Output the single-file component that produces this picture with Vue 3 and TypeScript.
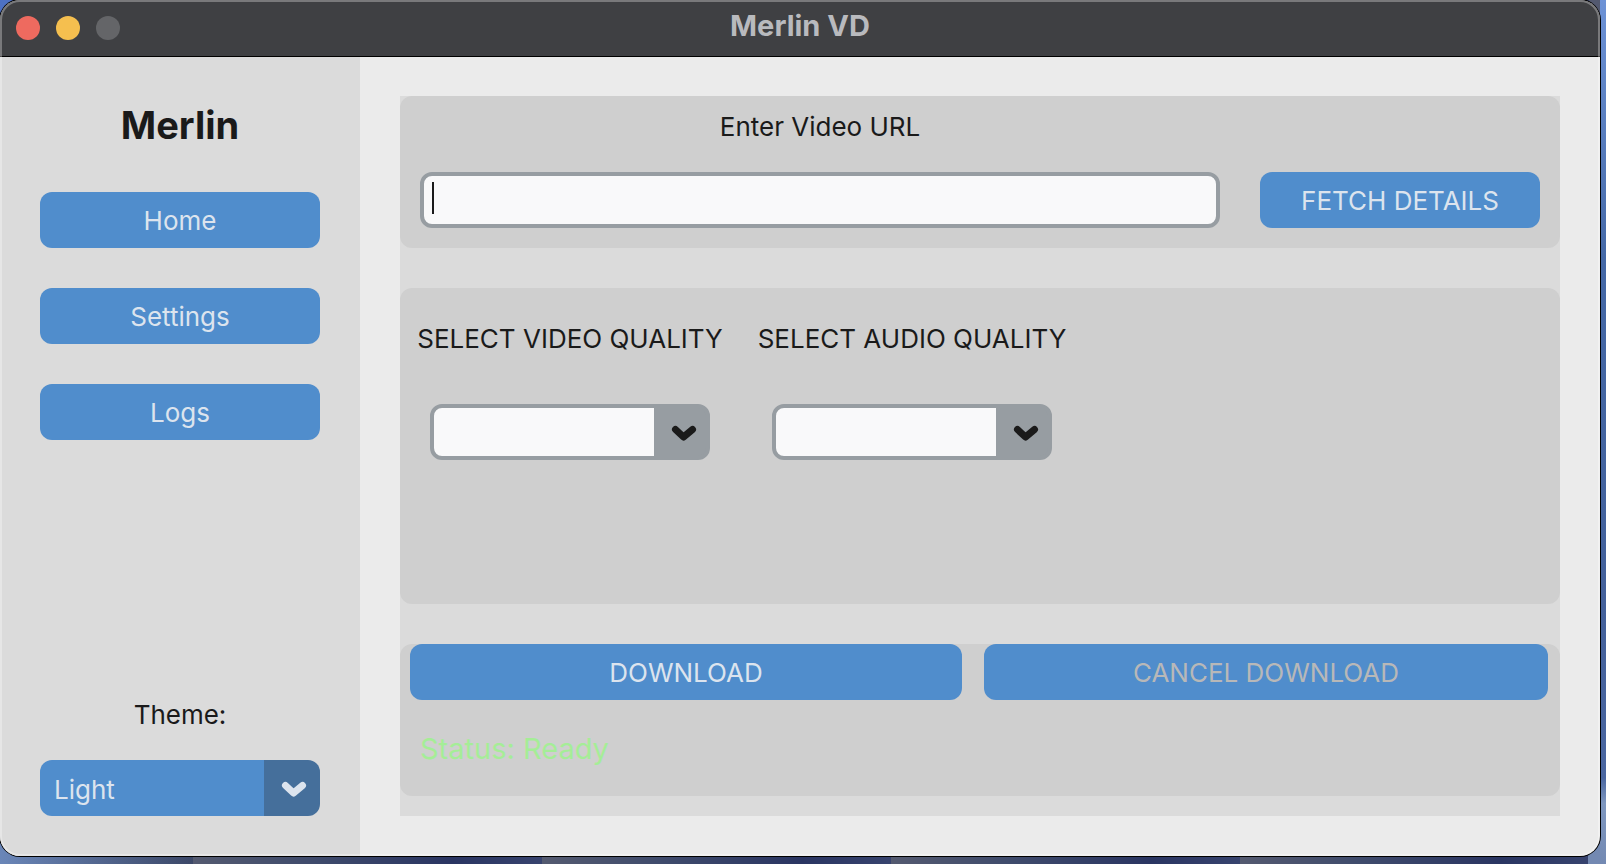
<script setup lang="ts">
import { ref } from 'vue'

interface QualityField {
  id: string
  label: string
}

const pages: string[] = ['Home', 'Settings', 'Logs']
const qualityFields: QualityField[] = [
  { id: 'video-quality', label: 'SELECT VIDEO QUALITY' },
  { id: 'audio-quality', label: 'SELECT AUDIO QUALITY' },
]

const theme = ref<string>('Light')
const videoUrl = ref<string>('')
const status = ref<string>('Ready')
</script>

<template>
  <div class="desktop">
    <div class="window">
      <header class="titlebar">
        <div class="lights">
          <button class="light close" type="button" aria-label="Close"></button>
          <button class="light minimize" type="button" aria-label="Minimize"></button>
          <button class="light zoom" type="button" aria-label="Zoom" disabled></button>
        </div>
        <span class="title">Merlin VD</span>
      </header>

      <div class="body">
        <aside class="sidebar">
          <h1 class="brand">Merlin</h1>
          <nav class="nav">
            <button v-for="page in pages" :key="page" class="btn" type="button">{{ page }}</button>
          </nav>
          <div class="theme">
            <label class="text" for="theme">Theme:</label>
            <div class="picker">
              <select id="theme" v-model="theme" class="select themed">
                <option>Light</option>
                <option>Dark</option>
                <option>System</option>
              </select>
              <svg class="chevron pale" viewBox="0 0 56 56" aria-hidden="true">
                <path d="M21.5 25.5L29.5 33L38.5 25.5" />
              </svg>
            </div>
          </div>
        </aside>

        <main class="main">
          <div class="content">
            <section class="card url">
              <label class="text" for="video-url">Enter Video URL</label>
              <div class="entry">
                <input id="video-url" v-model="videoUrl" class="input" type="text" />
                <span class="caret"></span>
              </div>
              <button class="btn fetch" type="button">FETCH DETAILS</button>
            </section>

            <section class="card quality">
              <div v-for="field in qualityFields" :key="field.id" class="field">
                <label class="text" :for="field.id">{{ field.label }}</label>
                <div class="picker">
                  <select :id="field.id" class="select combo">
                    <option value=""></option>
                  </select>
                  <svg class="chevron" viewBox="0 0 56 56" aria-hidden="true">
                    <path d="M21.5 25.5L29.5 33L38.5 25.5" />
                  </svg>
                </div>
              </div>
            </section>

            <section class="card actions">
              <div class="buttons">
                <button class="btn" type="button">DOWNLOAD</button>
                <button class="btn" type="button" disabled>CANCEL DOWNLOAD</button>
              </div>
              <p class="status" role="status">Status: {{ status }}</p>
            </section>
          </div>
        </main>
      </div>
    </div>
  </div>
</template>

<style>
body {
  margin: 0;
}
</style>

<style scoped>
* {
  box-sizing: border-box;
}

.desktop {
  display: flex;
  min-height: 100vh;
  padding: 0 6px 8px 0;
  background:
    linear-gradient(180deg, #6d92d6 0%, #4468a6 30%, #43609a 70%, #4a66a0 90%, #7f97bf 93%, #7389b2 100%) right / 6px 100% no-repeat,
    linear-gradient(#7389b2, #7389b2) right bottom / 18px 20px no-repeat,
    linear-gradient(#4d71c4, #4d71c4) left top / 20px 20px no-repeat,
    linear-gradient(90deg, #6a86b8, #3c4868) left bottom / 193px 100% no-repeat,
    repeating-linear-gradient(90deg, #545a70 0, #3f4b6c 120px, #2a3562 260px, #37436e 349px) 193px 0;
  color: #1a1a1a;
  font-family: Inter, "Liberation Sans", sans-serif;
  font-size: 26px;
  line-height: 32px;
}

.window {
  position: relative;
  display: flex;
  flex: 1;
  flex-direction: column;
  overflow: hidden;
  border-radius: 20px;
  background: #ebebeb;
  box-shadow: 0 0 0 1px #000;
}

.window::after {
  content: "";
  position: absolute;
  inset: 0;
  border-radius: 20px;
  box-shadow: inset 0 0 0 2px rgba(255, 255, 255, 0.3);
  pointer-events: none;
}

.titlebar {
  display: grid;
  grid-template-columns: 1fr auto 1fr;
  align-items: start;
  height: 57px;
  border-bottom: 1px solid #000;
  background: #3f4043;
}

.lights {
  display: flex;
  gap: 16px;
  padding: 16px;
}

.light {
  width: 24px;
  height: 24px;
  padding: 0;
  border: 0;
  border-radius: 50%;
}

.close {
  background: #ee6a5f;
}

.minimize {
  background: #f5bf4f;
}

.zoom {
  background: #646568;
}

.title {
  color: #b9babe;
  font-size: 29px;
  font-weight: 700;
  line-height: 52px;
}

.body {
  display: flex;
  flex: 1;
}

.sidebar {
  display: flex;
  flex-direction: column;
  width: 360px;
  padding: 40px;
  background: #dbdbdb;
}

.brand {
  margin: 0 0 39px;
  font-size: 38px;
  font-weight: 700;
  line-height: 56px;
  text-align: center;
}

.nav {
  display: flex;
  flex-direction: column;
  gap: 40px;
}

.theme {
  display: flex;
  flex-direction: column;
  gap: 29px;
  margin-top: auto;
}

.text {
  text-align: center;
  white-space: nowrap;
}

.btn {
  height: 56px;
  padding: 2px 12px 0;
  border: 0;
  border-radius: 12px;
  background: #508dcc;
  color: #dce4ee;
  font: inherit;
}

.btn:disabled {
  color: #b8b8b8;
}

.picker {
  position: relative;
  width: 280px;
}

.select {
  display: block;
  width: 100%;
  height: 56px;
  border-radius: 12px;
  appearance: none;
  color: inherit;
  font: inherit;
}

.themed {
  padding: 4px 60px 0 14px;
  border: 0;
  background: linear-gradient(#456f9b, #456f9b) right / 56px 100% no-repeat #508dcc;
  color: #dce4ee;
}

.combo {
  padding: 0 60px 0 8px;
  border: 4px solid #979da2;
  background: linear-gradient(#979da2, #979da2) right / 52px 100% no-repeat #f9f9fa;
}

.chevron {
  position: absolute;
  top: 0;
  right: 0;
  width: 56px;
  height: 56px;
  fill: none;
  stroke: #1a1a1a;
  stroke-linecap: round;
  stroke-linejoin: round;
  stroke-width: 7;
  pointer-events: none;
}

.pale {
  stroke: #dce4ee;
}

.main {
  display: flex;
  flex: 1;
  padding: 39px 40px 40px;
}

.content {
  display: flex;
  flex: 1;
  flex-direction: column;
  gap: 40px;
  padding-bottom: 20px;
  background: #dbdbdb;
}

.card {
  border-radius: 12px;
  background: #cfcfcf;
}

.url {
  display: grid;
  grid-template-columns: 1fr 280px;
  gap: 29px 40px;
  padding: 15px 20px 20px;
}

.entry {
  position: relative;
  grid-row: 2;
}

.input {
  display: block;
  width: 100%;
  height: 56px;
  padding: 0 8px;
  border: 4px solid #979da2;
  border-radius: 12px;
  outline: 0;
  background: #f9f9fa;
  color: inherit;
  font: inherit;
}

.caret {
  position: absolute;
  top: 10px;
  left: 12px;
  width: 2px;
  height: 32px;
  background: #1a1a1a;
}

.fetch {
  grid-row: 2;
}

.quality {
  display: flex;
  flex: 1;
  gap: 2px;
  padding: 35px 0;
}

.field {
  display: flex;
  flex-direction: column;
  align-items: center;
  gap: 49px;
  width: 340px;
}

.actions {
  padding: 0 12px 29px 10px;
}

.buttons {
  display: grid;
  grid-template-columns: 552fr 564fr;
  gap: 22px;
}

.status {
  margin: 31px 0 0 10px;
  color: #a5ed97;
  font-size: 29px;
  line-height: 36px;
}
</style>
